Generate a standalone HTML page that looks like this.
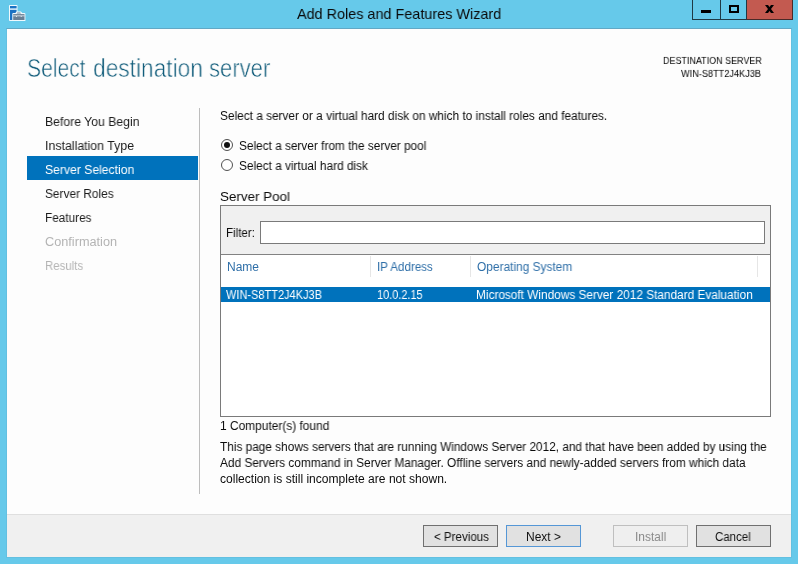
<!DOCTYPE html>
<html>
<head>
<meta charset="utf-8">
<title>Add Roles and Features Wizard</title>
<style>
html,body{margin:0;padding:0;}
body{width:798px;height:564px;overflow:hidden;background:#66c9ea;font-family:"Liberation Sans",sans-serif;font-size:12px;color:#1e1e1e;position:relative;}
.t{position:absolute;white-space:nowrap;line-height:1;transform-origin:0 50%;will-change:transform;}
.g{position:absolute;left:0;top:0;width:0;height:0;margin:0;padding:0;font-weight:normal;font-size:12px;}
.b{position:absolute;box-sizing:border-box;}
#content{left:7px;top:29px;width:784px;height:485px;background:#fdfdfd;}
#frame{left:6px;top:28px;width:786px;height:530px;border:1px solid #63c0e1;border-top-color:#62a8c5;}
#footer{left:7px;top:514px;width:784px;height:43px;background:#f0f0f0;border-top:1px solid #dfdfdf;}
.cap{top:0;height:20px;border:1px solid #1f3a45;border-top:none;}
#navsel{left:27px;top:156px;width:171px;height:24px;background:#0072bc;}
#vsep{left:199px;top:108px;width:1px;height:386px;background:#bdbdbd;}
.radio{width:12px;height:12px;border:1px solid #505050;border-radius:50%;background:#fff;}
.radio.on::after{content:"";position:absolute;left:2px;top:2px;width:6px;height:6px;border-radius:50%;background:#111;}
#group{left:220px;top:205px;width:551px;height:212px;border:1px solid #7a7a7a;background:#fff;}
#filterrow{left:221px;top:206px;width:549px;height:48px;background:#f0f0f0;}
#tabletop{left:221px;top:254px;width:549px;height:1px;background:#828282;}
#filterinput{left:260px;top:221px;width:505px;height:23px;border:1px solid #7a7a7a;background:#fff;}
.colsep{top:256px;width:1px;height:21px;background:#e6e6e6;}
#rowsel{left:221px;top:287px;width:549px;height:15px;background:#0072bc;}
.btn{top:525px;width:75px;height:22px;border:1px solid #707070;background:#e1e1e1;margin:0;padding:0;border-radius:0;font:inherit;color:inherit;text-align:left;overflow:visible;-webkit-appearance:none;appearance:none;}
.btn.def{border-color:#5597d6;}
.btn.dis{border-color:#bfbfbf;background:#efefef;}
</style>
</head>
<body>
  <div class="b" id="frame"></div>
  <div class="b" id="content"></div>
  <div class="b" id="footer"></div>

  <svg class="b" style="left:9px;top:5px" width="17" height="16" viewBox="0 0 17 16">
    <rect x="0" y="0" width="8.5" height="16" rx="0.8" fill="#f0f9fd"/>
    <rect x="1" y="1" width="6.6" height="2.4" fill="#1a72c3"/>
    <rect x="1" y="4.8" width="6.6" height="10.2" fill="#1a72c3"/>
    <path d="M3.3 16 V9 Q3.3 8.1 4.2 8.1 H6.3 L7.7 6.4 H11.9 L13.3 8.1 H15.5 Q16.4 8.1 16.4 9 V16 Z" fill="#f0f9fd"/>
    <rect x="4.2" y="9.1" width="11.3" height="5.9" fill="#687f94"/>
    <path d="M7.6 8.4 L8.4 7.4 H11.2 L12 8.4 Z" fill="#687f94"/>
    <path d="M4.2 10.4 H15.5 V11.3 H12.6 V12.1 H11.8 V11.3 H7.8 V12.1 H7 V11.3 H4.2 Z" fill="#f0f9fd"/>
  </svg>

  <div class="b cap" style="left:692px;width:29px;"><div class="b" style="left:8px;top:10px;width:10px;height:3px;background:#000"></div></div>
  <div class="b cap" style="left:720px;width:27px;"><div class="b" style="left:8px;top:5px;width:10px;height:8px;border:2px solid #000;"></div></div>
  <div class="b cap" style="left:746px;width:47px;background:#c35a50;border-color:#4a2a28;border-left-color:#1f3a45;">
    <div class="b" style="left:20.5px;top:5px;width:3px;height:8px;background:#000;transform:skewX(36.9deg)"></div><div class="b" style="left:20.5px;top:5px;width:3px;height:8px;background:#000;transform:skewX(-36.9deg)"></div>
  </div>

  <div class="b" id="navsel"></div>
  <div class="b" id="vsep"></div>

  <div class="b radio on" style="left:221px;top:139px"></div>
  <div class="b radio" style="left:221px;top:159px"></div>

  <div class="b" id="group"></div>
  <div class="b" id="filterrow"></div>
  <div class="b" id="tabletop"></div>
  <div class="b" id="filterinput"></div>
  <div class="b colsep" style="left:370px"></div>
  <div class="b colsep" style="left:470px"></div>
  <div class="b colsep" style="left:757px"></div>
  <div class="b" id="rowsel"></div>

  <button type="button" class="b btn" style="left:423px"><span class="t" style="left:10px;top:5px;font-size:12px;color:#111;transform:scaleX(0.9644);">&lt; Previous</span></button>
  <button type="button" class="b btn def" style="left:506px"><span class="t" style="left:18.8px;top:5px;font-size:12px;color:#111;transform:scaleX(0.9967);">Next &gt;</span></button>
  <button type="button" class="b btn dis" style="left:613px" disabled><span class="t" style="left:20.8px;top:5px;font-size:12px;color:#8a8a8a;transform:scaleX(0.9949);">Install</span></button>
  <button type="button" class="b btn" style="left:696px"><span class="t" style="left:18.3px;top:5px;font-size:12px;color:#111;transform:scaleX(0.9556);">Cancel</span></button>

  <div class="t" style="left:297px;top:6px;font-size:15px;color:#0a0a0a;transform:scaleX(0.9604);">Add Roles and Features Wizard</div>
  <h1 class="g"><span class="t" style="left:27.3px;top:56px;font-size:25px;color:#125d7b;transform:scaleX(0.8419);-webkit-text-stroke:0.55px #fdfdfd;">Select</span> <span class="t" style="left:92.8px;top:56px;font-size:25px;color:#125d7b;transform:scaleX(0.9096);-webkit-text-stroke:0.55px #fdfdfd;">destination</span> <span class="t" style="left:209.2px;top:56px;font-size:25px;color:#125d7b;transform:scaleX(0.8810);-webkit-text-stroke:0.55px #fdfdfd;">server</span></h1>
  <div class="t" style="left:662.5px;top:56px;font-size:10px;color:#000;transform:scale(0.8964,0.89);transform-origin:0 8px;">DESTINATION SERVER</div>
  <div class="t" style="left:681.3px;top:69px;font-size:10px;color:#000;transform:scale(0.9169,0.89);transform-origin:0 8px;">WIN-S8TT2J4KJ3B</div>
  <div class="t" style="left:45px;top:116px;font-size:12.5px;color:#1c1c1c;transform:scaleX(0.9770);">Before You Begin</div>
  <div class="t" style="left:45px;top:140px;font-size:12.5px;color:#1c1c1c;transform:scaleX(0.9877);">Installation Type</div>
  <div class="t" style="left:45px;top:164px;font-size:12.5px;color:#ffffff;transform:scaleX(0.9736);">Server Selection</div>
  <div class="t" style="left:45px;top:188px;font-size:12.5px;color:#1c1c1c;transform:scaleX(0.9509);">Server Roles</div>
  <div class="t" style="left:45px;top:212px;font-size:12.5px;color:#1c1c1c;transform:scaleX(0.9424);">Features</div>
  <div class="t" style="left:45px;top:236px;font-size:12.5px;color:#b4b4b4;transform:scaleX(1.0173);">Confirmation</div>
  <div class="t" style="left:45px;top:260px;font-size:12.5px;color:#b4b4b4;transform:scaleX(0.9139);">Results</div>
  <div class="t" style="left:220px;top:110px;font-size:12px;color:#0c0c0c;transform:scaleX(0.9875);">Select a server or a virtual hard disk on which to install roles and features.</div>
  <div class="t" style="left:239px;top:140px;font-size:12px;color:#0c0c0c;transform:scaleX(0.9854);">Select a server from the server pool</div>
  <div class="t" style="left:239px;top:160px;font-size:12px;color:#0c0c0c;transform:scaleX(0.9860);">Select a virtual hard disk</div>
  <div class="t" style="left:220px;top:190px;font-size:13.5px;color:#0c0c0c;transform:scaleX(0.9922);">Server Pool</div>
  <div class="t" style="left:226px;top:227px;font-size:12px;color:#0c0c0c;transform:scaleX(0.9600);">Filter:</div>
  <div class="t" style="left:227px;top:261px;font-size:12px;color:#2f6fa8;transform:scaleX(0.9995);">Name</div>
  <div class="t" style="left:376.8px;top:261px;font-size:12px;color:#2f6fa8;transform:scaleX(0.9649);">IP Address</div>
  <div class="t" style="left:476.5px;top:261px;font-size:12px;color:#2f6fa8;transform:scaleX(0.9922);">Operating System</div>
  <div class="t" style="left:225.7px;top:289px;font-size:12px;color:#ffffff;transform:scaleX(0.9169);">WIN-S8TT2J4KJ3B</div>
  <div class="t" style="left:376.8px;top:289px;font-size:12px;color:#ffffff;transform:scaleX(0.9111);">10.0.2.15</div>
  <div class="t" style="left:476.3px;top:289px;font-size:12px;color:#ffffff;transform:scaleX(0.9854);">Microsoft Windows Server 2012 Standard Evaluation</div>
  <div class="t" style="left:220px;top:420px;font-size:12px;color:#0c0c0c;transform:scaleX(0.9931);">1 Computer(s) found</div>
  <div class="t" style="left:220px;top:441px;font-size:12px;color:#0c0c0c;transform:scaleX(0.9850);">This page shows servers that are running Windows Server 2012, and that have been added by using the</div>
  <div class="t" style="left:220px;top:457px;font-size:12px;color:#0c0c0c;transform:scaleX(0.9867);">Add Servers command in Server Manager. Offline servers and newly-added servers from which data</div>
  <div class="t" style="left:220px;top:473px;font-size:12px;color:#0c0c0c;transform:scaleX(1.0048);">collection is still incomplete are not shown.</div>
</body>
</html>
